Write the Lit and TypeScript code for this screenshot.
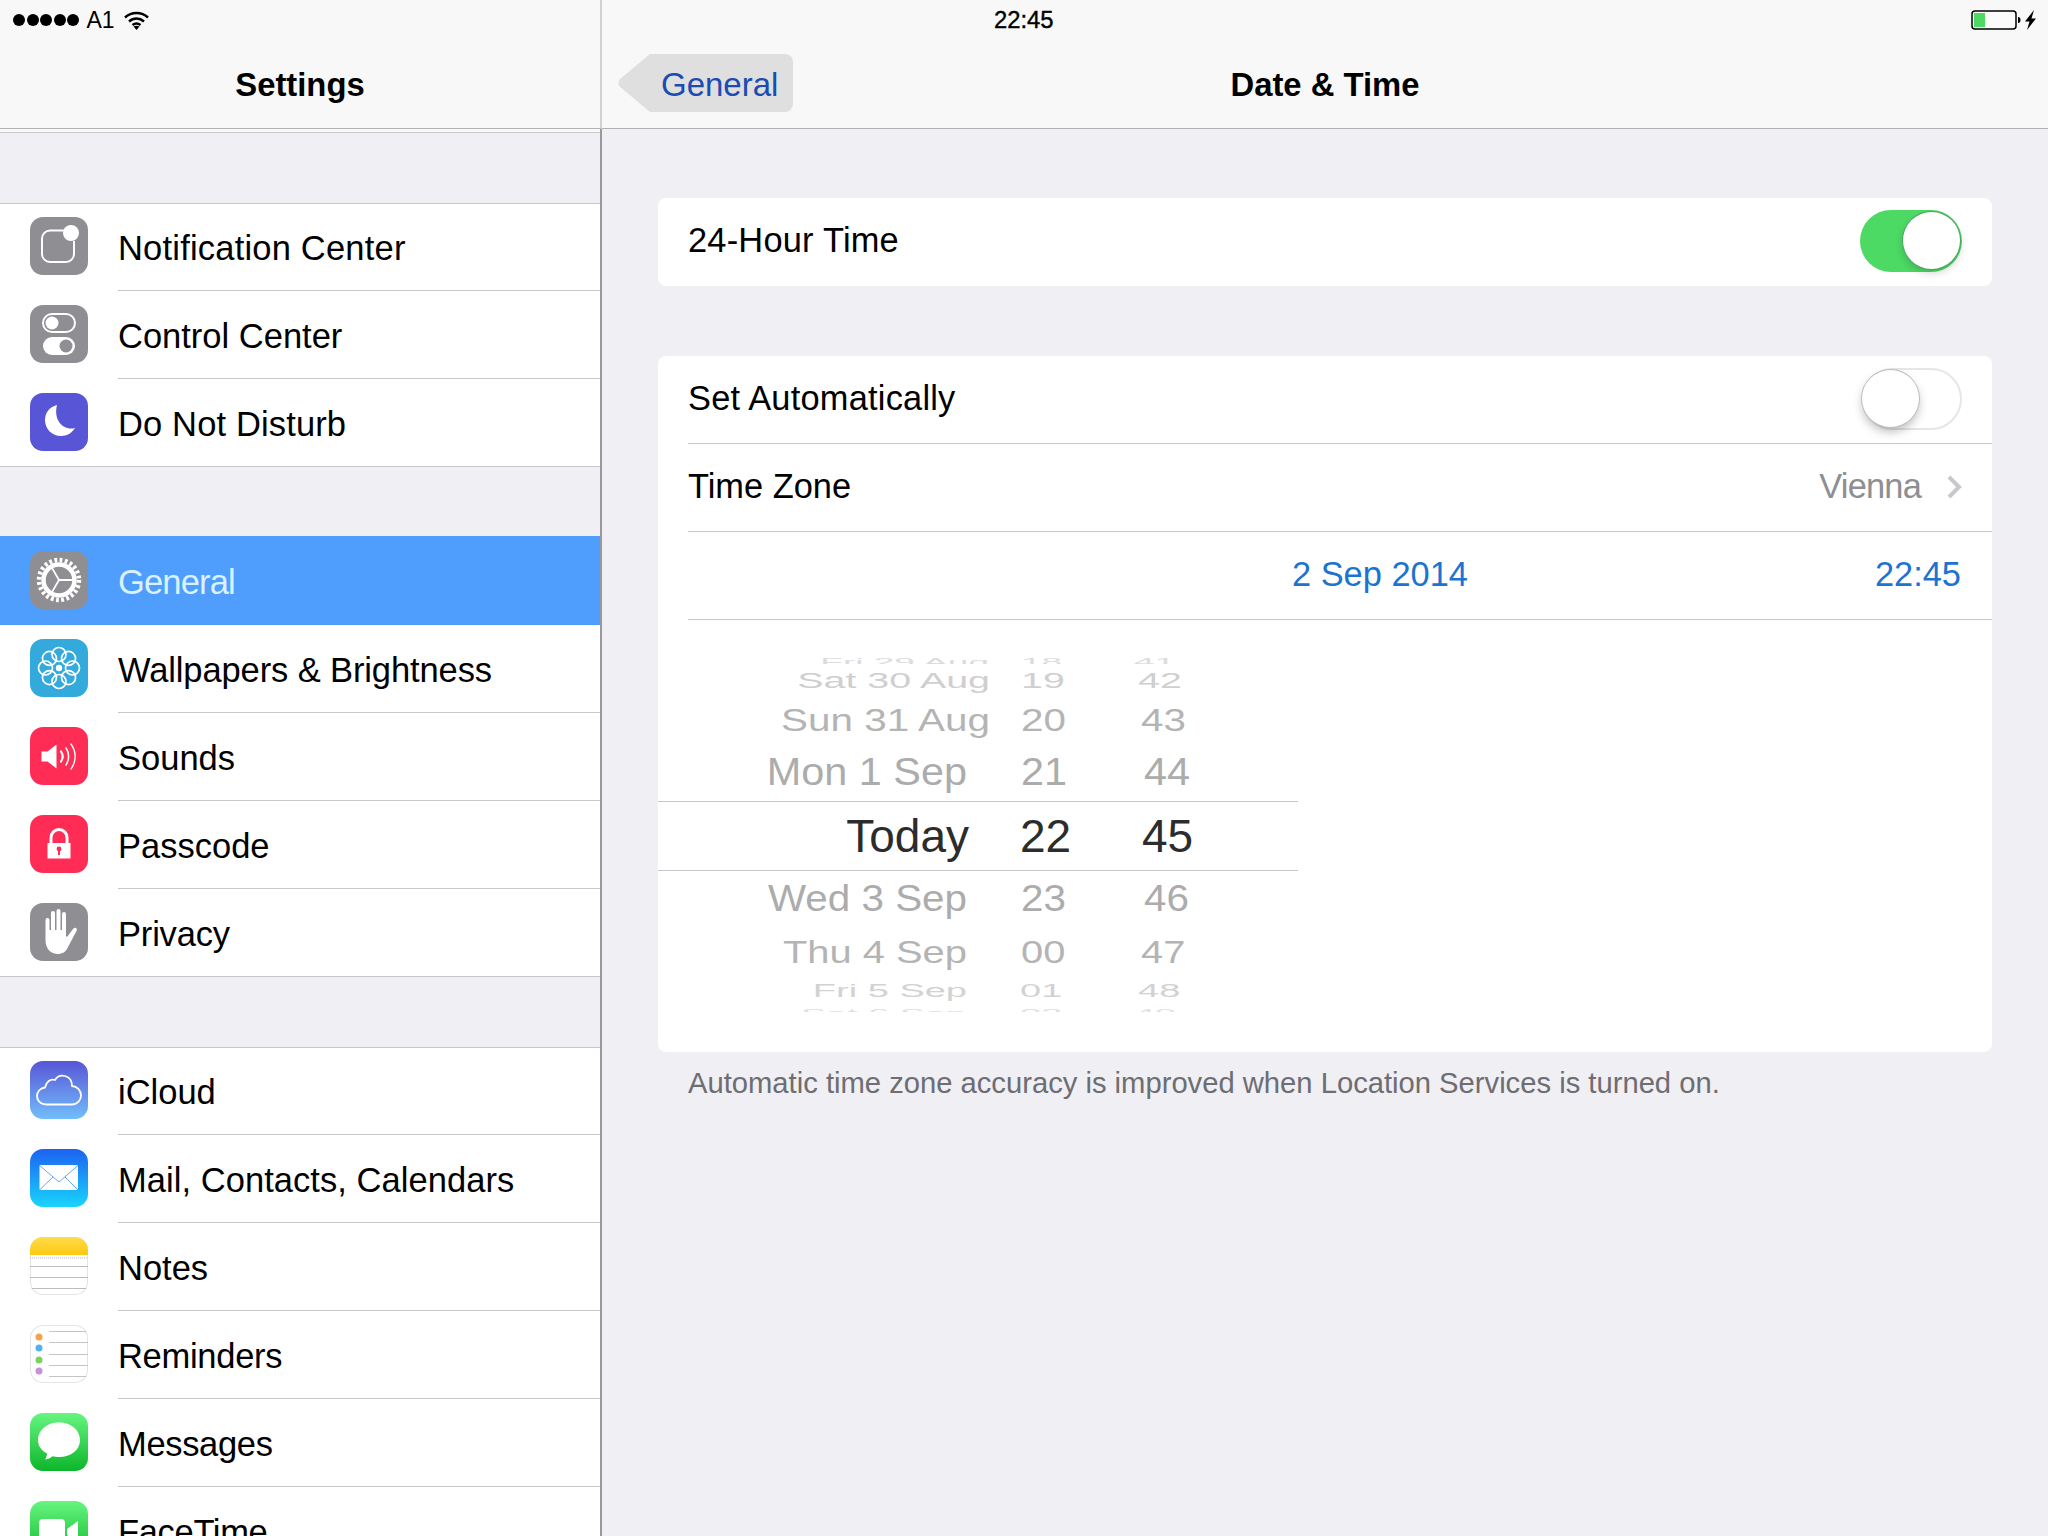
import { LitElement, html, css, svg } from "lit";
import { customElement } from "lit/decorators.js";

const S = (inner: unknown) => html`<svg viewBox="0 0 58 58" width="58" height="58">${inner}</svg>`;

const gearSpokes = [90, 210, 330];
const petals = [0, 45, 90, 135, 180, 225, 270, 315];

const icons: Record<string, { cls: string; art: unknown }> = {
  notif: {
    cls: "grey",
    art: S(svg`
      <path d="M34 13.500H20a8 8 0 0 0-8 8V37a8 8 0 0 0 8 8h16a8 8 0 0 0 8-8V24" fill="none" stroke="#fff" stroke-width="2"/>
      <circle cx="41" cy="16" r="8" fill="#fff"/>`),
  },
  control: {
    cls: "grey",
    art: S(svg`
      <rect x="13" y="9" width="32" height="18" rx="9" fill="none" stroke="#fff" stroke-width="2"/>
      <circle cx="22" cy="18" r="6.500" fill="#fff"/>
      <rect x="13" y="32" width="32" height="18" rx="9" fill="#fff"/>
      <circle cx="36" cy="41" r="6.500" fill="#8e8e93"/>`),
  },
  moon: {
    cls: "purple",
    art: S(svg`<path d="M27 12C19 14 15 20 15 27c0 9 7 16 16 16 6 0 11-3 14-8-11 3-22-7-18-23z" fill="#fff"/>`),
  },
  gear: {
    cls: "grey",
    art: S(svg`
      <circle cx="29" cy="29" r="20" fill="none" stroke="#fff" stroke-width="4.500" stroke-dasharray="2.800 2.436"/>
      <circle cx="29" cy="29" r="15.500" fill="none" stroke="#fff" stroke-width="4.500"/>
      ${gearSpokes.map((a) => svg`<line x1="29" y1="29" x2="29" y2="15" stroke="#fff" stroke-width="1.800" transform="rotate(${a} 29 29)"/>`)}`),
  },
  flower: {
    cls: "teal",
    art: S(svg`
      ${petals.map((a) => svg`<circle cx="29" cy="15.500" r="7" fill="none" stroke="#fff" stroke-width="1.700" transform="rotate(${a} 29 29)"/>`)}
      <circle cx="29" cy="29" r="3.200" fill="#fff"/>`),
  },
  sound: {
    cls: "pink",
    art: S(svg`
      <path d="M11.500 24.500h6l9-7v24l-9-7h-6z" fill="#fff"/>
      <g fill="none" stroke="#fff" stroke-linecap="round">
        <path d="M31 24.500c2 3 2 7 0 10" stroke-width="2.200"/>
        <path d="M36 21c3.500 5 3.500 12 0 17" stroke-width="1.600"/>
        <path d="M41 17c5.500 7.500 5.500 17.500 0 25" stroke-width="1.400"/>
      </g>`),
  },
  lock: {
    cls: "pink",
    art: S(svg`
      <path d="M21 29v-6.500a8 8 0 0 1 16 0V29" fill="none" stroke="#fff" stroke-width="3"/>
      <rect x="17.500" y="28" width="23" height="15.500" fill="#fff"/>
      <circle cx="29" cy="34" r="2.400" fill="#ff2d55"/>
      <rect x="28" y="34" width="2" height="6" fill="#ff2d55"/>`),
  },
  hand: {
    cls: "grey",
    art: S(svg`
      <path d="M15.500 37V17a2 2 0 0 1 4 0v10h1.500V10a2 2 0 0 1 4 0v17h1.500V8a2 2 0 0 1 4 0v19h1.500V11a2 2 0 0 1 4 0v22l1 1 6-8c2-2.500 5-.5 3.500 2L38 44c-2 5-6 7-10 7-7 0-12.500-5-12.500-14z" fill="#fff"/>`),
  },
  cloud: {
    cls: "cloudbg",
    art: S(svg`<path d="M16 43.500c-5 0-9-3.500-9-8.500 0-4.500 3.500-8 8-8.500 1-5 5-9 10-7.500 2-3.500 6-5 10-4 4.500 1.200 7 5 7 10 5 .5 9 4 9 9.500 0 5-4 9-9 9z" fill="none" stroke="#fff" stroke-width="1.800"/>`),
  },
  mail: {
    cls: "mailbg",
    art: S(svg`
      <rect x="9.500" y="16" width="38.500" height="25" rx="1" fill="#fff"/>
      <g fill="none" stroke="#3f8ef0" stroke-width=".8">
        <path d="M9.500 16.500 L29 33 L48 16.500"/>
        <path d="M9.500 41 L23 28"/>
        <path d="M48 41 L35 28"/>
      </g>`),
  },
  notes: {
    cls: "whitebg",
    art: S(svg`
      <rect width="58" height="18" fill="url(#ny)"/>
      <defs><linearGradient id="ny" x1="0" y1="0" x2="0" y2="1"><stop offset="0" stop-color="#ffdc4a"/><stop offset="1" stop-color="#fdc80f"/></linearGradient></defs>
      <line x1="0" y1="21" x2="58" y2="21" stroke="#b5b5b5" stroke-width="1" stroke-dasharray="1 1"/>
      <g stroke="#bcbcbc" stroke-width="1"><line x1="0" y1="29.500" x2="58" y2="29.500"/><line x1="0" y1="40.500" x2="58" y2="40.500"/><line x1="0" y1="51.500" x2="58" y2="51.500"/></g>`),
  },
  remind: {
    cls: "whitebg",
    art: S(svg`
      <g stroke="#c4c4c4" stroke-width="1">
        <line x1="19" y1="6.500" x2="58" y2="6.500"/><line x1="19" y1="17.500" x2="58" y2="17.500"/><line x1="19" y1="29.500" x2="58" y2="29.500"/><line x1="19" y1="40.500" x2="58" y2="40.500"/><line x1="19" y1="51.500" x2="58" y2="51.500"/>
      </g>
      <circle cx="9" cy="12" r="3.500" fill="#f5a24a"/><circle cx="9" cy="23" r="3.500" fill="#4fb4ee"/><circle cx="9" cy="35" r="3.500" fill="#79d45f"/><circle cx="9" cy="46" r="3.500" fill="#c88fde"/>`),
  },
  msg: {
    cls: "greenbg",
    art: S(svg`<path d="M29 9.500c12 0 21 7.500 21 17.500s-9 17-21 17c-2.500 0-4.500-.3-6.500-.8-2.500 2.300-6 3.300-7.500 3.300 1-1.500 2-3.500 2-6-6-3-9-8-9-13.500 0-10 9-17.500 21-17.500z" fill="#fff"/>`),
  },
  face: {
    cls: "greenbg",
    art: S(svg`
      <rect x="9" y="18" width="26" height="24" rx="4" fill="#fff"/>
      <path d="M37 28l11-8v22l-11-8z" fill="#fff"/>`),
  },
};

type Row = { icon: string; label: string; ls?: number; selected?: boolean };
const sections: Row[][] = [
  [
    { icon: "notif", label: "Notification Center", ls: 0.2 },
    { icon: "control", label: "Control Center" },
    { icon: "moon", label: "Do Not Disturb", ls: 0.14 },
  ],
  [
    { icon: "gear", label: "General", ls: -0.85, selected: true },
    { icon: "flower", label: "Wallpapers & Brightness", ls: -0.11 },
    { icon: "sound", label: "Sounds" },
    { icon: "lock", label: "Passcode" },
    { icon: "hand", label: "Privacy", ls: -0.18 },
  ],
  [
    { icon: "cloud", label: "iCloud" },
    { icon: "mail", label: "Mail, Contacts, Calendars", ls: 0.05 },
    { icon: "notes", label: "Notes" },
    { icon: "remind", label: "Reminders", ls: -0.29 },
    { icon: "msg", label: "Messages", ls: -0.33 },
    { icon: "face", label: "FaceTime", ls: -0.33 },
  ],
];

type Pick = {
  h: number; d: string; a: string; b: string; fs: number; sy: number; color: string;
  dr: number; ax: number; bx: number; dy?: number; sel?: boolean;
};
// dr = right edge of the date, ax/bx = left edges of hour/minute (page x)
const picks: Pick[] = [
  { h: 6, d: "Fri 29 Aug", a: "18", b: "41", fs: 37, sy: 0.3, color: "#dcdcdc", dr: 989, ax: 1021, bx: 1134, dy: 1 },
  { h: 34, d: "Sat 30 Aug", a: "19", b: "42", fs: 39.4, sy: 0.55, color: "#cfcfcf", dr: 990, ax: 1021, bx: 1138 },
  { h: 42, d: "Sun 31 Aug", a: "20", b: "43", fs: 40.4, sy: 0.78, color: "#b4b4b4", dr: 990, ax: 1021, bx: 1141, dy: 1 },
  { h: 61, d: "Mon 1 Sep", a: "21", b: "44", fs: 41.4, sy: 0.92, color: "#acacac", dr: 967, ax: 1021, bx: 1144, dy: 2 },
  { h: 70, d: "Today", a: "22", b: "45", fs: 46, sy: 1, color: "#2c2c2c", dr: 969, ax: 1020, bx: 1142, sel: true },
  { h: 54, d: "Wed 3 Sep", a: "23", b: "46", fs: 40.4, sy: 0.92, color: "#acacac", dr: 967, ax: 1021, bx: 1144 },
  { h: 54, d: "Thu 4 Sep", a: "00", b: "47", fs: 39.9, sy: 0.77, color: "#b4b4b4", dr: 967, ax: 1021, bx: 1141, dy: 1 },
  { h: 24, d: "Fri 5 Sep", a: "01", b: "48", fs: 38, sy: 0.48, color: "#d2d2d2", dr: 967, ax: 1020, bx: 1138 },
  { h: 9, d: "Sat 6 Sep", a: "02", b: "49", fs: 37.8, sy: 0.3, color: "#e0e0e0", dr: 967, ax: 1020, bx: 1134, dy: 5 },
];

@customElement("app-root")
export class AppRoot extends LitElement {
  static styles = css`
    :host {
      display: block;
      width: 2048px;
      height: 1536px;
      overflow: hidden;
      background: #efeff4;
      font-family: "Liberation Sans", Arial, sans-serif;
      color: #000;
    }
    .page { display: flex; height: 1536px; }
    .side { width: 602px; flex: none; display: flex; flex-direction: column; height: 1536px; overflow: hidden; }
    .side-head { height: 128px; background: #f8f8f8; border-bottom: 1px solid #b2b2b2; border-right: 2px solid #d2d2d2; display: flex; flex-direction: column; flex: none; box-sizing: content-box; }
    .side-body { flex: 1; border-right: 2px solid #98989e; background: #efeff4; overflow: hidden; }
    .strip { height: 3px; background: #f8f8f8; border-bottom: 1px solid #c8c8cc; }
    .status { height: 40px; display: flex; align-items: center; font-size: 23px; flex: none; }
    .side .status { padding-left: 13px; }
    .dots { display: flex; gap: 1.600px; margin-right: 7px; }
    .dots i { width: 12px; height: 12px; border-radius: 50%; background: #000; display: block; }
    .wifi { margin-left: 9px; display: block; }
    .nav { height: 88px; flex: none; display: flex; align-items: center; justify-content: center; }
    .title { font-size: 32.800px; font-weight: 700; line-height: 1; margin-top: 2px; }
    .section { margin-top: 70px; background: #fff; }
    .row { height: 88px; display: flex; align-items: center; padding-left: 30px; background: #fff; }
    .row:first-child { box-shadow: inset 0 1px #c8c8cc; }
    .row:last-child { border-bottom: 1px solid #c8c8cc; box-sizing: border-box; }
    .row.sel { background: #4f9efd; box-shadow: 0 -1px #4f9efd; }
    .ico { width: 58px; height: 58px; border-radius: 13px; overflow: hidden; flex: none; display: block; margin-bottom: 2px; }
    .ico svg { display: block; }
    .grey { background: #8e8e93; }
    .purple { background: #5856d6; }
    .teal { background: #34aadc; }
    .pink { background: #ff2d55; }
    .cloudbg { background: linear-gradient(#5856d6, #72bdfb); }
    .mailbg { background: linear-gradient(#1d62f0, #19d5fd); }
    .whitebg { background: #fff; box-shadow: inset 0 0 0 1px #e4e4e4; }
    .greenbg { background: linear-gradient(#67f580, #0cb62a); }
    .lab { margin-left: 30px; flex: 1; height: 88px; padding-top: 3px; display: flex; align-items: center; font-size: 34.500px; box-sizing: border-box; border-bottom: 1px solid #c8c8cc; }
    .row:last-child .lab { border-bottom: none; }
    .sel .lab { color: #daf1ff; border-bottom: none; }
    .main { flex: 1; display: flex; flex-direction: column; min-width: 0; }
    .main-head { height: 128px; background: #f8f8f8; border-bottom: 1px solid #b2b2b2; flex: none; display: flex; flex-direction: column; box-sizing: content-box; }
    .main .status { padding-left: 392px; padding-right: 11px; }
    .time { -webkit-text-stroke: 0.4px #000; font-size: 23.800px; }
    .batt { margin-left: auto; display: block; }
    .mnav { display: grid; grid-template-columns: 1fr auto 1fr; align-items: center; }
    .back { display: flex; height: 58px; width: max-content; margin-left: 16px; margin-bottom: 2px; }
    .back svg { display: block; }
    .back span { background: #dfdfdf; height: 58px; box-sizing: border-box; padding: 3px 15px 0 11px; display: flex; align-items: center; border-radius: 0 8px 8px 0; color: #1a4cb2; font-size: 33px; }
    .content { padding: 69px 56px 0 56px; flex: 1; }
    .card { background: #fff; border-radius: 8px; }
    .card + .card { margin-top: 70px; }
    .crow { height: 88px; display: flex; align-items: center; padding: 0 30px 3px; font-size: 34.400px; box-sizing: border-box; }
    .tight { letter-spacing: 0.22px; }
    .sep { margin-left: 30px; height: 1px; background: #c8c8cc; margin-top: -1px; position: relative; }
    .sw { width: 102px; height: 62px; border-radius: 31px; margin-left: auto; display: flex; align-items: center; box-sizing: border-box; padding: 0 2px; }
    .sw i { width: 57px; height: 57px; border-radius: 50%; background: #fff; display: block; flex: none; }
    .sw.on { background: #4cd964; justify-content: flex-end; }
    .sw.on i { box-shadow: 0 0 0 1px #4da565, 0 4px 8px rgba(0, 0, 0, 0.18); }
    .sw.off { border: 2px solid #e6e6e6; background: #fff; width: 100px; padding: 0; }
    .sw.off i { margin-left: -2px; box-shadow: 0 0 0 1px #bdbdbd, 0 5px 10px rgba(0, 0, 0, 0.25); }
    .vienna { margin-left: auto; color: #8e8e93; letter-spacing: -0.8px; }
    .chev { margin-left: 25px; display: block; }
    .blue { color: #1c73d0; }
    .d { margin-left: 604px; }
    .t { margin-left: auto; margin-right: 1px; }
    .picker { width: 640px; padding-top: 38px; height: 394px; overflow: hidden; }
    .prow { overflow: hidden; display: block; box-sizing: border-box; }
    .prow.selrow { border-top: 1px solid #c8c8cc; border-bottom: 1px solid #c8c8cc; }
    .pcols { display: flex; height: 100%; align-items: center; }
    .pcols span { display: block; line-height: 1; white-space: nowrap; flex: none; }
    .foot { padding: 16px 0 0 30px; font-size: 29.200px; color: #6d6d72; line-height: 30px; }
  `;

  private toggle(on: boolean) {
    return html`<div class="sw ${on ? "on" : "off"}"><i></i></div>`;
  }

  private pickRow(p: Pick) {
    const tf = `transform: translateY(${p.dy ?? 0}px) scaleY(${p.sy});`;
    return html`<div class="prow ${p.sel ? "selrow" : ""}" style="height:${p.h}px">
      <div class="pcols" style="color:${p.color};font-size:${p.fs}px">
        <span style="width:${p.dr - 658}px;text-align:right;${tf}"><b style="font-weight:400">${p.d}</b></span>
        <span style="margin-left:${p.ax - p.dr}px;width:${p.bx - p.ax}px;${tf}">${p.a}</span>
        <span style="${tf}">${p.b}</span>
      </div>
    </div>`;
  }

  render() {
    return html`<div class="page">
      <div class="side">
        <div class="side-head">
          <div class="status">
            <div class="dots"><i></i><i></i><i></i><i></i><i></i></div>
            <span>A1</span>
            <svg class="wifi" width="25" height="20" viewBox="0 0 25 20">
              <g fill="none" stroke="#000" stroke-width="2.400">
                <path d="M1 7.500c6.500-6 16.500-6 23 0"/>
                <path d="M5 11.500c4.500-4 10.500-4 15 0"/>
                <path d="M8.500 15c2.500-2 5.500-2 8 0"/>
              </g>
              <path d="M12.500 20l-3-3.500c2-1 4-1 6 0z" fill="#000"/>
            </svg>
          </div>
          <div class="nav"><div class="title">Settings</div></div>
        </div>
        <div class="side-body">
          <div class="strip"></div>
          ${sections.map(
            (sec) => html`<div class="section">
              ${sec.map(
                (r) => html`<div class="row ${r.selected ? "sel" : ""}">
                  <div class="ico ${icons[r.icon].cls}">${icons[r.icon].art}</div>
                  <div class="lab" style="letter-spacing:${r.ls ?? 0}px">${r.label}</div>
                </div>`
              )}
            </div>`
          )}
        </div>
      </div>
      <div class="main">
        <div class="main-head">
          <div class="status">
            <span class="time">22:45</span>
            <svg class="batt" width="66" height="22" viewBox="0 0 66 22">
              <rect x="1" y="2" width="44" height="18" rx="3" fill="#fff" fill-opacity=".4" stroke="#000" stroke-width="1.500"/>
              <rect x="3" y="4" width="11" height="14" fill="#4cd964"/>
              <path d="M47 8c2 0 2.500 1.500 2.500 3s-.5 3-2.500 3z" fill="#000"/>
              <path d="M63 1 L54 12.500 H58.500 L56 21 L65 9.500 H60.500z" fill="#000"/>
            </svg>
          </div>
          <div class="nav mnav">
            <div class="back">
              <svg width="32" height="58" viewBox="0 0 32 58"><path d="M32 0 L1 26 Q0 29 1 32 L32 58z" fill="#dfdfdf"/></svg>
              <span>General</span>
            </div>
            <div class="title">Date &amp; Time</div>
            <div></div>
          </div>
        </div>
        <div class="content">
          <div class="card">
            <div class="crow"><span class="tight">24-Hour Time</span> ${this.toggle(true)}</div>
          </div>
          <div class="card">
            <div class="crow"><span class="tight">Set Automatically</span> ${this.toggle(false)}</div>
            <div class="sep"></div>
            <div class="crow">
              Time Zone
              <span class="vienna">Vienna</span>
              <svg class="chev" width="16" height="24" viewBox="0 0 16 24"><path d="M3 2 L13 12 L3 22" fill="none" stroke="#c7c7cc" stroke-width="4"/></svg>
            </div>
            <div class="sep"></div>
            <div class="crow blue">
              <span class="d">2 Sep 2014</span>
              <span class="t">22:45</span>
            </div>
            <div class="sep"></div>
            <div class="picker">${picks.map((p) => this.pickRow(p))}</div>
          </div>
          <div class="foot">Automatic time zone accuracy is improved when Location Services is turned on.</div>
        </div>
      </div>
    </div>`;
  }
}
